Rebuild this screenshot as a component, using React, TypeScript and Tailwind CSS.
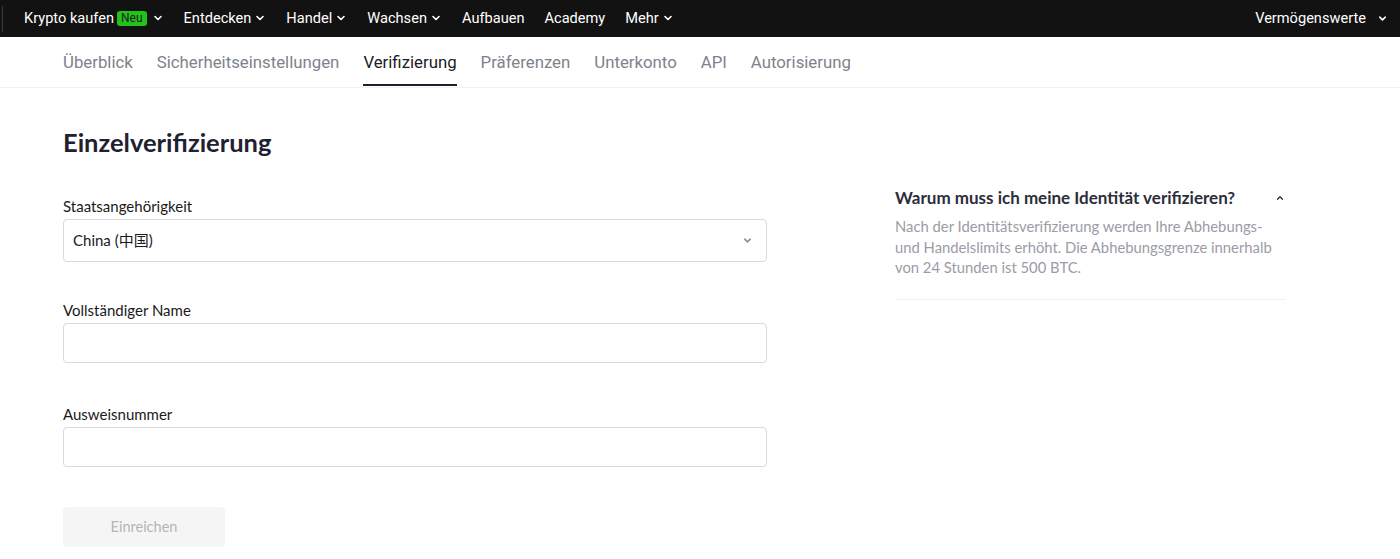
import React from "react";

const Chevron = ({ className = "" }: { className?: string }) => (
  <svg viewBox="0 0 12 12" className={className} fill="none" stroke="currentColor" strokeWidth="1.6" strokeLinecap="round" strokeLinejoin="round">
    <path d="M3 4.5 L6 7.5 L9 4.5" />
  </svg>
);

const navItems: { label: string; chev: boolean }[] = [
  { label: "Entdecken", chev: true },
  { label: "Handel", chev: true },
  { label: "Wachsen", chev: true },
  { label: "Aufbauen", chev: false },
  { label: "Academy", chev: false },
  { label: "Mehr", chev: true },
];

const tabs = ["Überblick", "Sicherheitseinstellungen", "Verifizierung", "Präferenzen", "Unterkonto", "API", "Autorisierung"];

export default function App() {
  return (
    <div className="min-h-[559px] bg-white" style={{ fontFamily: "Lato, 'Noto Sans CJK SC', sans-serif" }}>
      {/* Top nav */}
      <div className="h-[37px] bg-[#121212] flex items-center text-white text-[14.6px] pr-3" style={{ fontFamily: "Roboto, sans-serif" }}>
        <div className="w-px h-[26px] bg-[#3a3a3a] ml-[2px] mr-[21px]" />
        <div className="flex items-center">
          <span>Krypto kaufen</span>
          <span className="ml-[3px] bg-[#22c21b] text-[#1b1b1b] text-[12px] leading-[15px] px-[4px] rounded-[3px]">Neu</span>
          <Chevron className="w-[12px] h-[12px] ml-[5px]" />
        </div>
        {navItems.map((n) => (
          <div key={n.label} className="flex items-center ml-[20px]">
            <span>{n.label}</span>
            {n.chev && <Chevron className="w-[12px] h-[12px] ml-[3px]" />}
          </div>
        ))}
        <div className="ml-auto flex items-center">
          <span>Vermögenswerte</span>
          <Chevron className="w-[11px] h-[11px] ml-[11px]" />
        </div>
      </div>

      {/* Tabs */}
      <div className="h-[51px] border-b border-[#f2f2f2] flex items-stretch pl-[63px] gap-[24px] text-[16.8px]" style={{ fontFamily: "Roboto, sans-serif" }}>
        {tabs.map((t) => {
          const active = t === "Verifizierung";
          return (
            <div key={t} className={`relative flex items-center pt-[1px] ${active ? "text-[#1b1b26]" : "text-[#7f828c]"}`}>
              {t}
              {active && <div className="absolute left-0 right-0 bottom-[1px] h-[2px] bg-[#1e1e30]" />}
            </div>
          );
        })}
      </div>

      {/* Content */}
      <div className="flex pl-[63px] pt-[38px]">
        <div className="w-[704px]">
          <h1 className="text-[25.5px] font-bold text-[#1e2130] leading-[32px]">Einzelverifizierung</h1>

          <div className="mt-[38px]">
            <div className="text-[15px] text-[#1a1a1a] leading-[20px]">Staatsangehörigkeit</div>
            <div className="mt-[3px] h-[43px] border border-[#d9d9d9] rounded-[4px] flex items-center px-[9px] text-[15px] text-[#1a1a1a]">
              <span>China (中国)</span>
              <Chevron className="ml-auto mr-[4px] w-[11px] h-[11px] text-[#8a8a95]" />
            </div>
          </div>

          <div className="mt-[38px]">
            <div className="text-[15px] text-[#1a1a1a] leading-[20px]">Vollständiger Name</div>
            <div className="mt-[3px] h-[40px] border border-[#d9d9d9] rounded-[4px]" />
          </div>

          <div className="mt-[41px]">
            <div className="text-[15px] text-[#1a1a1a] leading-[20px]">Ausweisnummer</div>
            <div className="mt-[3px] h-[40px] border border-[#d9d9d9] rounded-[4px]" />
          </div>

          <button className="mt-[40px] w-[162px] h-[40px] bg-[#f5f5f5] rounded-[4px] text-[14.5px] text-[#b5b5b5]">Einreichen</button>
        </div>

        <div className="ml-[128px] w-[391px] pt-[60px]">
          <div className="flex items-center justify-between">
            <div className="text-[17px] font-bold text-[#2b2e3a] leading-[24px]">Warum muss ich meine Identität verifizieren?</div>
            <svg viewBox="0 0 12 12" className="w-[10px] h-[10px] text-[#2b2e3a] mr-[1px]" fill="none" stroke="currentColor" strokeWidth="1.6" strokeLinecap="round" strokeLinejoin="round">
              <path d="M3 7.5 L6 4.5 L9 7.5" />
            </svg>
          </div>
          <p className="mt-[6px] text-[14.8px] leading-[20.5px] text-[#9a9ca6]">
            Nach der Identitätsverifizierung werden Ihre Abhebungs-
            <br />
            und Handelslimits erhöht. Die Abhebungsgrenze innerhalb
            <br />
            von 24 Stunden ist 500 BTC.
          </p>
          <div className="mt-[21px] h-px bg-[#f0f0f0]" />
        </div>
      </div>
    </div>
  );
}
